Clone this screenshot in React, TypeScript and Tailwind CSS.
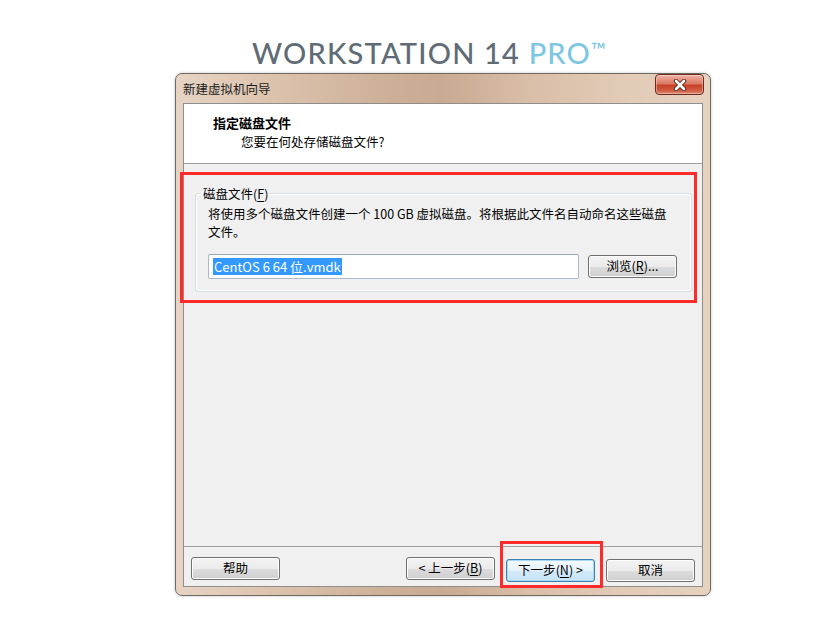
import React from 'react';

const cjk = "font-['Noto_Sans_CJK_SC',sans-serif]";

const WinButton = ({ label, hotkey, before, after, primary }: { label: string; hotkey?: string; before?: string; after?: string; primary?: boolean }) => (
  <button
    className={`w-[89px] h-[23px] rounded-[3px] border text-[12.5px] leading-none text-black ${cjk} ${
      primary
        ? 'border-[#3c7fb1] bg-[linear-gradient(180deg,#f4fafe_0%,#e4f2fb_50%,#d3eaf9_51%,#c6e3f7_100%)] shadow-[inset_0_0_0_1px_#a7d8f5]'
        : 'border-[#707070] bg-[linear-gradient(180deg,#f3f3f3_0%,#ebebeb_50%,#dddddd_51%,#cfcfcf_100%)] shadow-[inset_0_0_0_1px_#fcfcfc]'
    }`}
  >
    {before}
    {label}
    {hotkey && (
      <>
        (<span className="underline underline-offset-2">{hotkey}</span>)
      </>
    )}
    {after}
  </button>
);

export default function App() {
  return (
    <div className="relative w-[838px] h-[635px] bg-white overflow-hidden pt-[35px]">
      {/* Product title */}
      <div className="ml-[252px] h-[29px] text-[29px] leading-[29px] tracking-[1.2px] font-['Lato',sans-serif] font-medium text-[#5f6c76] whitespace-nowrap">
        WORKSTATION 14 <span className="text-[#7ec7e2]">PRO</span>
        <span className="text-[#7ec7e2] text-[20px] tracking-normal align-[7px]">™</span>
      </div>

      {/* Dialog window */}
      <div className="ml-[175px] mt-[9px] w-[536px] h-[523px] rounded-[7px] border border-[#6f6962] bg-[linear-gradient(90deg,#e7d4c4_0%,#dcc3ae_18%,#ceb199_38%,#c9aa92_50%,#d9bea8_66%,#e2cbb7_84%,#e6d2c0_100%)] flex flex-col shadow-[0_0_3px_rgba(0,0,0,0.25)]">
        {/* Title bar */}
        <div className="h-[29px] flex items-start justify-between">
          <div className={`pl-[7px] pt-[6px] text-[12.5px] leading-[17px] text-[#1b1b1b] ${cjk}`}>新建虚拟机向导</div>
          <div className="mr-[6px] w-[49px] h-[21px] rounded-[4px] border border-[#6a2b1f] bg-[linear-gradient(180deg,#eeb2a4_0%,#dc7a63_45%,#c5432b_55%,#cf5a40_80%,#e08a72_100%)] flex items-center justify-center shadow-[inset_0_0_0_1px_rgba(255,255,255,0.35)]">
            <svg width="14" height="12" viewBox="0 0 14 12">
              <path d="M3 2 L11 10 M11 2 L3 10" stroke="#5a2418" strokeWidth="4.5" strokeLinecap="round" />
              <path d="M3 2 L11 10 M11 2 L3 10" stroke="#ffffff" strokeWidth="2.6" strokeLinecap="round" />
            </svg>
          </div>
        </div>

        {/* Client area */}
        <div className="mx-[7px] h-[484px] border border-[#8e8e8e] bg-[#f0f0f0] flex flex-col">
          {/* Header */}
          <div className={`h-[60px] bg-white border-b border-[#a0a0a0] pt-[10px] ${cjk}`}>
            <div className="pl-[29px] text-[13px] leading-[17px] font-bold text-black">指定磁盘文件</div>
            <div className="pl-[57px] mt-[2px] text-[12.5px] leading-[17px] text-black">您要在何处存储磁盘文件?</div>
          </div>

          {/* Body */}
          <div className="flex-1">
            <fieldset className={`ml-[11px] mr-[10px] mt-[21px] border border-[#d5dfe5] rounded-[3px] pb-[12px] shadow-[inset_0_0_0_1px_#ffffff] ${cjk}`}>
              <legend className="ml-[5px] px-[2px] text-[12.5px] leading-[17px] text-black">
                磁盘文件(<span className="underline underline-offset-2">F</span>)
              </legend>
              <div className="pl-[12px] pt-[3px] text-[12.5px] leading-[18px] text-black">
                <div>将使用多个磁盘文件创建一个 100 GB 虚拟磁盘。将根据此文件名自动命名这些磁盘</div>
                <div>文件。</div>
              </div>
              <div className="pl-[12px] mt-[13px] flex items-center gap-[9px]">
                <div className="w-[371px] h-[25px] border border-[#aab9cb] border-t-[#9aaabd] rounded-[2px] bg-white flex items-center pl-[4px]">
                  <span className="bg-[#3399ff] text-white text-[13px] leading-[17px] px-[1px]">CentOS 6 64 位.vmdk</span>
                </div>
                <WinButton label="浏览" hotkey="R" after="..." />
              </div>
            </fieldset>
          </div>

          {/* Footer */}
          <div className="h-[40px] border-t border-[#a0a0a0] flex items-start pt-[10px] px-[7px]">
            <WinButton label="帮助" />
            <div className="flex-1" />
            <WinButton label="上一步" hotkey="B" before="< " />
            <div className="ml-[11px]">
              <WinButton label="下一步" hotkey="N" after=" >" primary />
            </div>
            <div className="ml-[11px]">
              <WinButton label="取消" />
            </div>
          </div>
        </div>
      </div>

      {/* Red annotation boxes */}
      <div className="absolute left-[180px] top-[172px] w-[517px] h-[131px] border-[3px] border-[#ff2b2b]" />
      <div className="absolute left-[500px] top-[541px] w-[103px] h-[47px] border-[3px] border-[#ff2b2b]" />
    </div>
  );
}
